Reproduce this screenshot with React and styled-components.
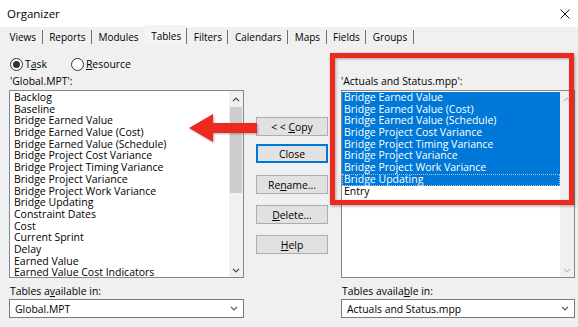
import React from 'react';
import styled, { createGlobalStyle } from 'styled-components';

const GlobalStyle = createGlobalStyle`
    html, body {
        margin: 0;
        padding: 0;
        background: #f0f0f0;
    }
    body {
        font-family: "Open Sans", "Noto Sans", sans-serif;
        color: #000;
    }
`

const RED = '#ec2a1f';
const BLUE = '#0078d7';

const StyledWindow = styled.div`
    position: relative;
    width: 578px;
    height: 327px;
    overflow: hidden;
    background: #f0f0f0;
`

const StyledTitleBar = styled.div`
    height: 27px;
    background: #ffffff;
    display: flex;
    align-items: center;
    justify-content: space-between;
    padding: 0 8px 0 7px;
    box-sizing: border-box;
    font-size: 11.5px;

    svg {
        display: block;
    }
`

const StyledTabStrip = styled.div`
    height: 19px;
    display: flex;
    align-items: stretch;
    padding-left: 3px;
    font-size: 10px;
`

const StyledTab = styled.div`
    position: relative;
    display: flex;
    align-items: center;
    padding: 0 ${({ active }) => (active ? '6px' : '6.5px')};
    margin-top: ${({ active }) => (active ? '-2px' : '0')};
    background: ${({ active }) => (active ? '#f4f4f4' : 'transparent')};

    &::after {
        content: '';
        position: absolute;
        right: 0;
        top: 3px;
        bottom: 2px;
        width: 1px;
        background: ${({ hideBar }) => (hideBar ? 'transparent' : '#6f6f6f')};
    }
`

const StyledContent = styled.div`
    display: grid;
    grid-template-columns: 235px 72px 235px;
    grid-template-rows: 16px 18px 188px 21px 19px;
    column-gap: 12px;
    padding: 10px 0 0 9px;
    font-size: 10.5px;

    > .middle {
        grid-column: 2;
        grid-row: 3;
    }
`

const StyledRadioRow = styled.div`
    display: flex;
    align-items: center;
    gap: 24px;
    padding-left: 1px;
    font-size: 10.4px;
`

const StyledRadio = styled.label`
    display: flex;
    align-items: center;
    gap: 2px;
`

const StyledRadioCircle = styled.span`
    width: 11px;
    height: 11px;
    border: 1px solid #333;
    border-radius: 50%;
    background: #fff;
    display: flex;
    align-items: center;
    justify-content: center;

    &::after {
        content: '';
        width: 7px;
        height: 7px;
        border-radius: 50%;
        background: ${({ checked }) => (checked ? '#333' : 'transparent')};
    }
`

const StyledLabel = styled.div`
    display: flex;
    align-items: ${({ bottom }) => (bottom ? 'flex-end' : 'center')};
    padding-bottom: ${({ bottom }) => (bottom ? '1px' : '0')};
    padding-left: ${({ indent }) => indent || 1}px;
    font-size: 10.4px;
`

const StyledListBox = styled.div`
    display: flex;
    border: 1px solid #828790;
    background: #fff;
    box-sizing: border-box;
    margin-left: ${({ shift }) => shift || 0}px;
`

const StyledItems = styled.div`
    flex: 1;
    padding: 1px 0 0 ${({ flush }) => (flush ? 0 : 2)}px;
    overflow: hidden;
`

const StyledItem = styled.div`
    height: 11.7px;
    line-height: 11.7px;
    padding-left: 2px;
    white-space: nowrap;
    background: ${({ selected }) => (selected ? BLUE : 'transparent')};
    color: ${({ selected }) => (selected ? '#ffffff' : '#000000')};
    outline: ${({ focused }) => (focused ? '1px dotted #9fc6ee' : 'none')};
    outline-offset: -1px;
`

const StyledScrollBar = styled.div`
    width: 14px;
    background: #f0f0f0;
    display: flex;
    flex-direction: column;
    align-items: center;
    justify-content: space-between;
    padding: 6px 0 4px;
    box-sizing: border-box;
    position: relative;

    > .thumb {
        position: absolute;
        left: 1px;
        right: 1px;
        top: 16px;
        height: 86px;
        background: #cdcdcd;
    }
`

const StyledButtonColumn = styled.div`
    display: flex;
    flex-direction: column;
    padding-top: 27px;
`

const StyledButton = styled.div`
    height: 19px;
    box-sizing: border-box;
    margin-top: ${({ gap }) => gap || 0}px;
    background: #e1e1e1;
    border: 1px solid ${({ primary }) => (primary ? BLUE : '#adadad')};
    box-shadow: ${({ primary }) => (primary ? `inset 0 0 0 1px ${BLUE}` : 'none')};
    display: flex;
    align-items: center;
    justify-content: center;
    font-size: 10.4px;
    white-space: pre;
`

const StyledSelect = styled.div`
    display: flex;
    align-items: center;
    justify-content: space-between;
    border: 1px solid #7a7a7a;
    background: #fff;
    box-sizing: border-box;
    padding: 0 5px 0 5px;
    font-size: 10.4px;
    margin-left: ${({ shift }) => shift || 0}px;
`

const StyledHighlightBox = styled.div`
    position: absolute;
    left: 330px;
    top: 53px;
    width: 244px;
    height: 152px;
    box-sizing: border-box;
    border: 5px solid ${RED};
    box-shadow: 1px 1px 3px rgba(0, 0, 0, 0.35), inset 1px 1px 3px rgba(0, 0, 0, 0.3);
    pointer-events: none;
`

const StyledArrow = styled.svg`
    position: absolute;
    left: 187px;
    top: 112px;
    filter: drop-shadow(1px 1px 1px rgba(0, 0, 0, 0.3));
`

const leftTables = [
    'Backlog',
    'Baseline',
    'Bridge Earned Value',
    'Bridge Earned Value (Cost)',
    'Bridge Earned Value (Schedule)',
    'Bridge Project Cost Variance',
    'Bridge Project Timing Variance',
    'Bridge Project Variance',
    'Bridge Project Work Variance',
    'Bridge Updating',
    'Constraint Dates',
    'Cost',
    'Current Sprint',
    'Delay',
    'Earned Value',
    'Earned Value Cost Indicators',
];

const rightTables = [
    'Bridge Earned Value',
    'Bridge Earned Value (Cost)',
    'Bridge Earned Value (Schedule)',
    'Bridge Project Cost Variance',
    'Bridge Project Timing Variance',
    'Bridge Project Variance',
    'Bridge Project Work Variance',
    'Bridge Updating',
    'Entry',
];

const tabs = ['Views', 'Reports', 'Modules', 'Tables', 'Filters', 'Calendars', 'Maps', 'Fields', 'Groups'];

const Chevron = ({ up, color = '#444' }) => (
    <svg width="8" height="5" viewBox="0 0 8 5">
        <polyline
            points={ up ? '1,4.2 4,1.2 7,4.2' : '1,0.8 4,3.8 7,0.8' }
            fill="none"
            stroke={ color }
            strokeWidth="1.2"
        />
    </svg>
);

const ScrollBar = ({ disabled }) => (
    <StyledScrollBar>
        { !disabled && <div className="thumb" /> }
        <Chevron up color={ disabled ? '#bfbfbf' : '#444' } />
        <Chevron color={ disabled ? '#bfbfbf' : '#444' } />
    </StyledScrollBar>
);

const App = () => {
    return (
        <StyledWindow>
            <GlobalStyle />

            <StyledTitleBar>
                <span>Organizer</span>
                <svg width="10" height="10" viewBox="0 0 10 10">
                    <path d="M0.5 0.5 L9.5 9.5 M9.5 0.5 L0.5 9.5" stroke="#111" strokeWidth="1" />
                </svg>
            </StyledTitleBar>

            <StyledTabStrip>
                { tabs.map(tab => (
                    <StyledTab key={ tab } active={ tab === 'Tables' } hideBar={ tab === 'Modules' }>
                        { tab }
                    </StyledTab>
                )) }
            </StyledTabStrip>

            <StyledContent>
                <StyledRadioRow>
                    <StyledRadio>
                        <StyledRadioCircle checked />
                        <span>T<u>a</u>sk</span>
                    </StyledRadio>
                    <StyledRadio>
                        <StyledRadioCircle />
                        <span><u>R</u>esource</span>
                    </StyledRadio>
                </StyledRadioRow>
                <div />
                <div />

                <StyledLabel>'Global.MPT':</StyledLabel>
                <div />
                <StyledLabel>'Actuals and Status.mpp':</StyledLabel>

                <StyledListBox>
                    <StyledItems>
                        { leftTables.map(name => <StyledItem key={ name }>{ name }</StyledItem>) }
                    </StyledItems>
                    <ScrollBar />
                </StyledListBox>

                <StyledButtonColumn className="middle">
                    <StyledButton><span>{ '< < ' }<u>C</u>opy</span></StyledButton>
                    <StyledButton primary gap={ 8 }>Close</StyledButton>
                    <StyledButton gap={ 12 }><span>Re<u>n</u>ame...</span></StyledButton>
                    <StyledButton gap={ 11 }><span><u>D</u>elete...</span></StyledButton>
                    <StyledButton gap={ 11 }><span><u>H</u>elp</span></StyledButton>
                </StyledButtonColumn>

                <StyledListBox shift={ 1 }>
                    <StyledItems flush>
                        { rightTables.map((name, i) => (
                            <StyledItem
                                key={ name }
                                selected={ name !== 'Entry' }
                                focused={ i === 7 }
                            >
                                { name }
                            </StyledItem>
                        )) }
                    </StyledItems>
                    <ScrollBar disabled />
                </StyledListBox>

                <StyledLabel bottom><span>Tables a<u>v</u>ailable in:</span></StyledLabel>
                <div />
                <StyledLabel bottom indent={ 2 }><span>Tables availa<u>b</u>le in:</span></StyledLabel>

                <StyledSelect>
                    <span>Global.MPT</span>
                    <Chevron color="#555" />
                </StyledSelect>
                <div />
                <StyledSelect shift={ 1 }>
                    <span>Actuals and Status.mpp</span>
                    <Chevron color="#555" />
                </StyledSelect>
            </StyledContent>

            <StyledHighlightBox />

            <StyledArrow width="72" height="32" viewBox="0 0 72 32">
                <polygon points="2,16 26,2 26,11 70,11 70,21 26,21 26,30" fill={ RED } />
            </StyledArrow>
        </StyledWindow>
    );
};

export default App;
